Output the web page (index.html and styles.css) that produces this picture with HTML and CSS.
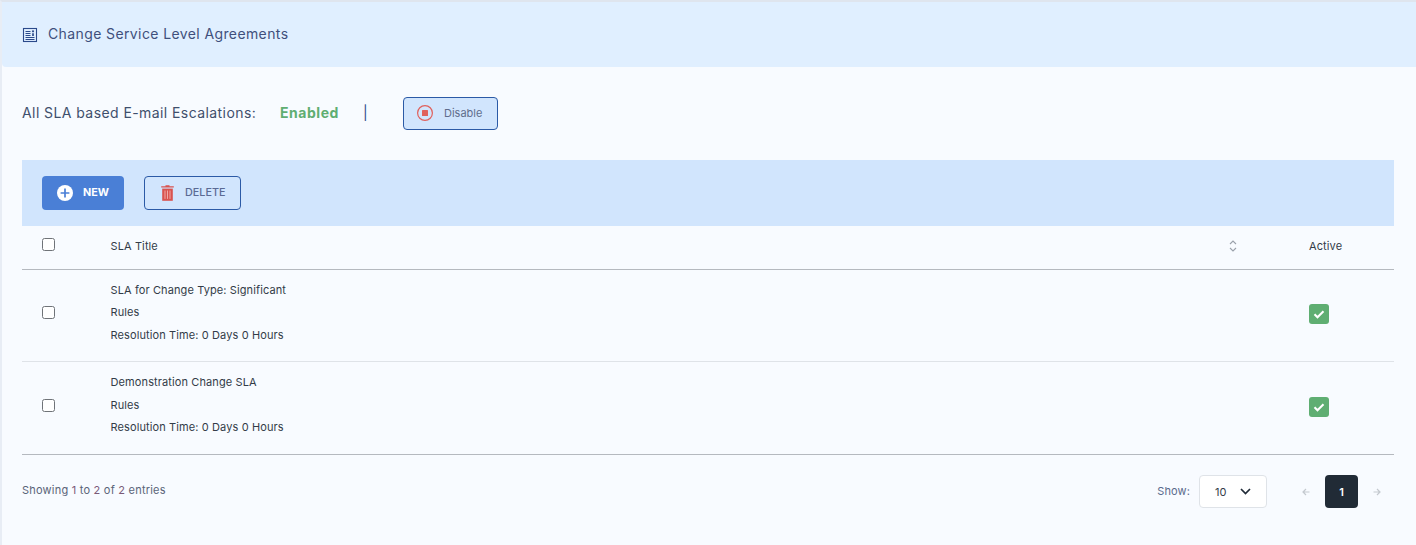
FILE: index.html
```html
<!DOCTYPE html>
<html lang="en">
<head>
<meta charset="utf-8">
<title>Change Service Level Agreements</title>
<link rel="stylesheet" href="styles.css">
</head>
<body>
<div class="page">
  <header class="title-bar">
    <svg class="title-icon" width="16" height="16" viewBox="0 0 16 16" fill="none" stroke="#2b4a8b">
      <rect x="1.5" y="1.5" width="13" height="13" stroke-width="1.1"/>
      <path d="M3.5 4.5h5M3.5 6.5h5M3.5 8.5h5M3.5 10.5h9M3.5 12.5h9" stroke-width="1"/>
      <path d="M11 6.3v2.7" stroke-width="1.7"/>
      <circle cx="11" cy="4.3" r="1.1" fill="#2b4a8b" stroke="none"/>
    </svg>
    <h1 class="title">Change Service Level Agreements</h1>
  </header>

  <main class="content">
    <div class="status-row">
      <span class="status-label">All SLA based E-mail Escalations:</span>
      <strong class="status-value">Enabled</strong>
      <span class="status-sep">|</span>
      <button class="btn-disable" type="button">
        <svg width="18" height="18" viewBox="0 0 18 18" fill="none">
          <circle cx="9" cy="9" r="7.4" stroke="#e0605c" stroke-width="1.2"/>
          <rect x="6" y="6" width="6" height="6" rx="0.5" fill="#e0605c"/>
        </svg>
        <span>Disable</span>
      </button>
    </div>

    <div class="toolbar">
      <button class="btn btn-new" type="button">
        <svg width="16" height="16" viewBox="0 0 16 16">
          <circle cx="8" cy="8" r="8" fill="#fff"/>
          <path d="M8 3.6v8.8M3.6 8h8.8" stroke="#4a7fd6" stroke-width="1.7"/>
        </svg>
        <span>NEW</span>
      </button>
      <button class="btn btn-delete" type="button">
        <svg width="13" height="16" viewBox="0 0 13 16">
          <path d="M4.5 1.2V0.3h4v0.9H12.8v1.4H0.2V1.2z" fill="#d9534f"/>
          <path d="M1.2 3.6h10.6v12.2H1.2z" fill="#d9534f"/>
          <path d="M4 5.5v8.4M6.5 5.5v8.4M9 5.5v8.4" stroke="#f0a8a6" stroke-width="1"/>
        </svg>
        <span>DELETE</span>
      </button>
    </div>

    <div class="table">
      <div class="row row-head">
        <div class="cell-check"><span class="checkbox"></span></div>
        <div class="cell-title">SLA Title</div>
        <svg class="sort" width="8" height="12" viewBox="0 0 8 12" fill="none" stroke="#9aa1aa" stroke-width="1.1">
          <path d="M1 4l3-3 3 3M1 8l3 3 3-3"/>
        </svg>
        <div class="cell-active">Active</div>
      </div>
      <div class="row row-body">
        <div class="cell-check"><span class="checkbox"></span></div>
        <div class="cell-title">
          <p>SLA for Change Type: Significant</p>
          <p>Rules</p>
          <p>Resolution Time: 0 Days 0 Hours</p>
        </div>
        <div class="cell-active">
          <span class="tick"><svg width="12" height="10" viewBox="0 0 12 10" fill="none"><path d="M1.5 5.2l3 3 6-6" stroke="#fff" stroke-width="2.1"/></svg></span>
        </div>
      </div>
      <div class="row row-body row-last">
        <div class="cell-check"><span class="checkbox"></span></div>
        <div class="cell-title">
          <p>Demonstration Change SLA</p>
          <p>Rules</p>
          <p>Resolution Time: 0 Days 0 Hours</p>
        </div>
        <div class="cell-active">
          <span class="tick"><svg width="12" height="10" viewBox="0 0 12 10" fill="none"><path d="M1.5 5.2l3 3 6-6" stroke="#fff" stroke-width="2.1"/></svg></span>
        </div>
      </div>
    </div>

    <footer class="table-foot">
      <span class="entries">Showing <em>1</em> to <em>2</em> of <em>2</em> entries</span>
      <div class="pager">
        <span class="show-label">Show:</span>
        <div class="select">
          <span>10</span>
          <svg width="11" height="7" viewBox="0 0 11 7" fill="none"><path d="M1 1l4.5 4.5L10 1" stroke="#1f2a37" stroke-width="1.7"/></svg>
        </div>
        <svg class="arrow arrow-prev" width="8" height="8" viewBox="0 0 8 8" fill="none" stroke="#c4c9cf" stroke-width="1.2"><path d="M7.5 4H1M4 1L1 4l3 3"/></svg>
        <span class="page-current">1</span>
        <svg class="arrow arrow-next" width="8" height="8" viewBox="0 0 8 8" fill="none" stroke="#c4c9cf" stroke-width="1.2"><path d="M.5 4H7M4 1l3 3-3 3"/></svg>
      </div>
    </footer>
  </main>
</div>
</body>
</html>
```

FILE: styles.css
```css
* { box-sizing: border-box; }
html, body { margin: 0; padding: 0; height: 100%; }
body {
  font-family: Inter, "Liberation Sans", sans-serif;
  background: #f8fbff;
  color: #2f3a4a;
  overflow: hidden;
}
.page {
  height: 545px;
  border-top: 2px solid #dfe5ee;
  border-left: 2px solid #e8edf5;
}
.title-bar {
  height: 65px;
  background: #e0efff;
  border-bottom-left-radius: 4px;
  display: flex;
  align-items: center;
  padding-left: 20px;
  gap: 10px;
}
.title-icon { flex: none; }
.title {
  margin: 0 0 2px;
  font-size: 14px;
  font-weight: 400;
  letter-spacing: 0.39px;
  color: #3f4f7c;
}
.content { padding: 0 22px 0 20px; }
.status-row {
  height: 33px;
  margin-top: 30px;
  display: flex;
  align-items: center;
  font-size: 14px;
  color: #3f4f6c;
}
.status-label { width: 258px; letter-spacing: 0.42px; padding-bottom: 2px; }
.status-value { width: 85px; color: #5fae72; font-weight: 700; letter-spacing: 0.55px; padding-bottom: 2px; }
.status-sep { width: 38px; color: #2b4a8b; margin-left: -2px; padding-bottom: 2px; }
.btn-disable {
  width: 95px;
  height: 33px;
  margin-left: 2px;
  display: flex;
  align-items: center;
  gap: 10px;
  padding: 0 0 2px 12px;
  background: #d1e5fd;
  border: 1px solid #2b5aa6;
  border-radius: 4px;
  font: 400 11px Inter, "Liberation Sans", sans-serif;
  color: #5f6d8c;
}
.btn span { padding-bottom: 2px; }
.toolbar {
  height: 66px;
  margin-top: 30px;
  background: #d1e5fd;
  display: flex;
  align-items: center;
  gap: 20px;
  padding: 0 0 0 20px;
}
.btn {
  height: 34px;
  display: flex;
  align-items: center;
  border-radius: 4px;
  font: 600 10.8px Inter, "Liberation Sans", sans-serif;
}
.btn-new {
  width: 82px;
  gap: 10px;
  padding: 0 0 0 15px;
  background: #4a7fd6;
  border: 0;
  color: #fff;
  font-weight: 700;
}
.btn-delete {
  width: 97px;
  gap: 11px;
  padding: 0 0 0 16px;
  background: transparent;
  border: 1px solid #2b5aa6;
  color: #5a6a94;
  font-weight: 500;
}
.row {
  display: flex;
  font-size: 11px;
  letter-spacing: 0.11px;
  color: #333c48;
}
.row-head {
  height: 43.6px;
  align-items: center;
  padding-bottom: 2px;
  border-bottom: 1px solid #b5b9bf;
}
.row-head .checkbox { margin-bottom: 4px; }
.row-body {
  height: 92.4px;
  border-bottom: 1px solid #dfe3e8;
}
.row-last { height: 93px; border-bottom-color: #b5b9bf; }
.cell-check { width: 88.5px; padding-left: 20px; display: flex; }
.row-body .cell-check { padding-top: 36.6px; }
.checkbox {
  width: 13px;
  height: 13px;
  background: #fff;
  border: 1px solid #6f7378;
  border-radius: 2.5px;
}
.cell-title { flex: 1; }
.row-body .cell-title { padding-top: 14.1px; }
.cell-title p { margin: 0 0 9.5px; line-height: 13px; }
.cell-title p:last-child { margin-bottom: 0; }
.sort { margin-right: 72.5px; }
.cell-active { width: 85px; }
.row-body .cell-active { padding-top: 34.7px; }
.tick {
  width: 20px;
  height: 20px;
  border-radius: 3px;
  background: #5fae72;
  display: flex;
  align-items: center;
  justify-content: center;
}
.table-foot {
  height: 72px;
  display: flex;
  align-items: center;
  justify-content: space-between;
}
.entries { font-size: 11px; letter-spacing: 0.22px; color: #5a6478; padding-bottom: 1px; }
.entries em { font-style: normal; color: #7a5a78; }
.pager { display: flex; align-items: center; font-size: 11px; padding: 2px 13px 0 0; }
.show-label { color: #5a6a8c; margin-right: 9px; letter-spacing: 0.1px; padding-bottom: 1px; }
.select {
  width: 68px;
  height: 33px;
  background: #fff;
  border: 1px solid #dfe3e8;
  border-radius: 4px;
  display: flex;
  align-items: center;
  justify-content: space-between;
  padding: 0 15px 0 15px;
  color: #333c48;
}
.arrow-prev { margin-left: 35px; }
.page-current {
  width: 33px;
  height: 33px;
  margin: 0 15px;
  background: #212b36;
  color: #fff;
  border-radius: 4px;
  font-weight: 600;
  display: flex;
  align-items: center;
  justify-content: center;
}
```
